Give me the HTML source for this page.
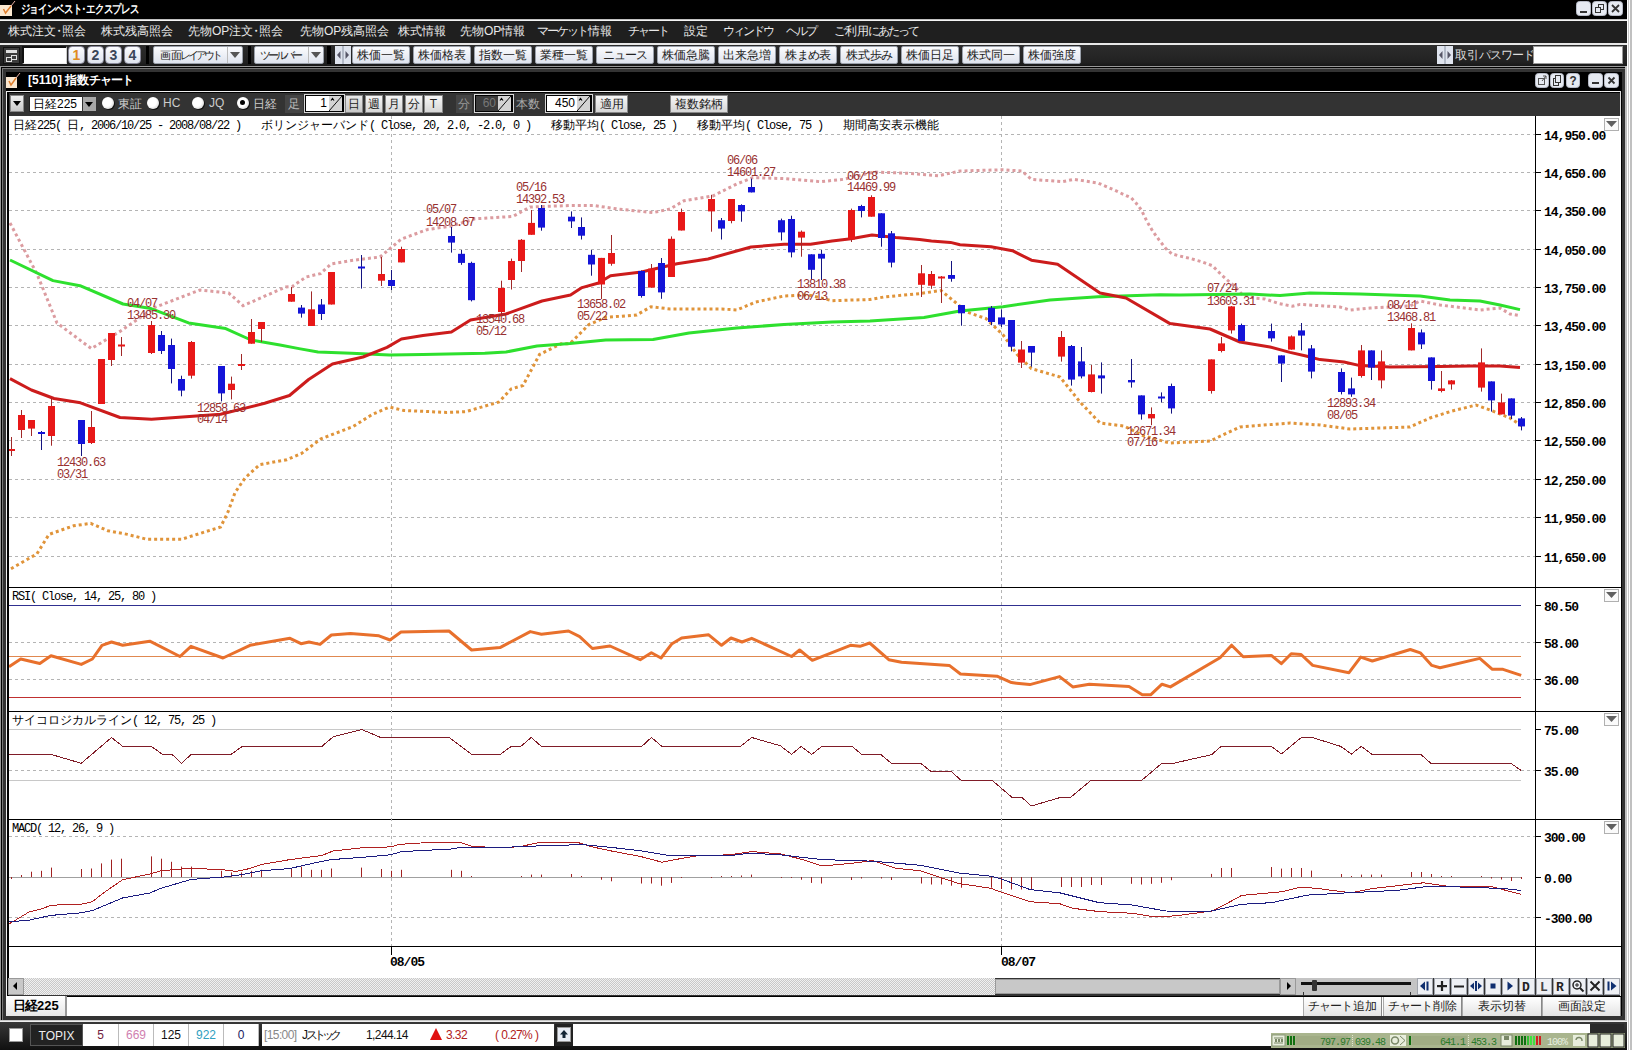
<!DOCTYPE html>
<html><head><meta charset="utf-8">
<style>
*{margin:0;padding:0;box-sizing:border-box}
html,body{width:1632px;height:1050px;overflow:hidden;background:#2c2c2c;font-family:"Liberation Sans",sans-serif;}
.a{position:absolute}
.t{position:absolute;white-space:nowrap;line-height:1}
svg text{font-family:"Liberation Mono",monospace}
.lbl{font-size:12px;fill:#983030;letter-spacing:-1.2px}
.ax{font-size:13px;font-weight:bold;fill:#000;letter-spacing:-1px}
.hd{font-size:12px;fill:#000}
.cj{font-family:"Liberation Sans",sans-serif}
.menu{color:#e8e8e8;font-size:12px;top:25px;--kw:10px}
.btn{position:absolute;background:linear-gradient(#fbfcfe,#dfe4ee);border:1px solid #9aa0aa;border-radius:2px;color:#222;font-size:12px;text-align:center;line-height:16px;white-space:nowrap}
.tb{top:46px;height:18px;width:58px}
.wb{position:absolute;background:linear-gradient(#f8faff,#dde2ec);border-radius:3px;border:1px solid #777;color:#333;font-size:11px;font-weight:bold;text-align:center;line-height:12px}
.cb{position:absolute;top:95px;height:18px;background:linear-gradient(#f6f6f6,#d6d6d6);border:1px solid #888;color:#222;font-size:12px;text-align:center;line-height:16px}
.inp{position:absolute;background:#fff;border:1px solid #666;font-size:12px;text-align:right;color:#000;line-height:14px}
.radio{position:absolute;top:97px;width:12px;height:12px;border-radius:50%;background:radial-gradient(circle at 40% 40%,#fff 45%,#bbb 100%);box-shadow:1px 1px 0 #111}
.rt{position:absolute;top:96px;color:#ccc;font-size:12px}
.c{display:inline-flex;justify-content:center;width:var(--cw,12px);font-weight:inherit}
.c.k{width:var(--kw,11px)}
.c.h{width:6px}
.zb{position:absolute;top:979px;width:16px;height:16px;background:linear-gradient(#f4f6fa,#d8dce4);border:1px solid #999;color:#10306a;font-size:12px;font-weight:bold;text-align:center;line-height:14px}
.cell{position:absolute;top:1024px;height:22px;background:#fff;font-size:12px;text-align:center;line-height:22px;border-right:1px solid #bbb}
.bb{position:absolute;top:997px;height:19px;background:linear-gradient(#fff,#e4e4e4);border-left:1px solid #aaa;border-right:1px solid #888;font-size:12px;color:#222;text-align:center;line-height:18px}
</style></head><body>
<!-- title bar -->
<div class="a" style="left:0;top:0;width:1632px;height:19px;background:#000"></div>
<svg class="a" style="left:0;top:0" width="18" height="18"><rect x="0" y="5" width="12" height="11" fill="#fbe8d0"/><path d="M3.5 9 L5.5 13 L11 6" stroke="#e08030" stroke-width="1.5" fill="none"/><path d="M11 6 L15 1" stroke="#e8b0a0" stroke-width="1"/></svg>
<div class="t" style="left:21px;top:3px;color:#fff;font-size:12px;font-weight:bold;transform:scaleX(0.79);transform-origin:0 0"><b class="c k">ジ</b><b class="c k">ョ</b><b class="c k">イ</b><b class="c k">ン</b><b class="c k">ベ</b><b class="c k">ス</b><b class="c k">ト</b><b class="c h">・</b><b class="c k">エ</b><b class="c k">ク</b><b class="c k">ス</b><b class="c k">プ</b><b class="c k">レ</b><b class="c k">ス</b></div>
<svg class="a" style="left:1576px;top:1px" width="15" height="15"><rect x="0.5" y="0.5" width="14" height="14" rx="3" fill="#e6eaf2" stroke="#b8bcc8"/><rect x="4" y="10" width="7" height="2" fill="#333"/></svg><svg class="a" style="left:1592px;top:1px" width="15" height="15"><rect x="0.5" y="0.5" width="14" height="14" rx="3" fill="#e6eaf2" stroke="#b8bcc8"/><rect x="6.5" y="3.5" width="5" height="5" fill="none" stroke="#333"/><rect x="3.5" y="6.5" width="5" height="5" fill="#e6eaf2" stroke="#333"/></svg><svg class="a" style="left:1608px;top:1px" width="15" height="15"><rect x="0.5" y="0.5" width="14" height="14" rx="3" fill="#e6eaf2" stroke="#b8bcc8"/><path d="M4 4 L11 11 M11 4 L4 11" stroke="#333" stroke-width="1.8"/></svg>
<div class="a" style="left:0;top:19px;width:1632px;height:1px;background:#c0c0c0"></div><div class="a" style="left:0;top:20px;width:1632px;height:1px;background:#f4f4f4"></div>
<!-- menu -->
<div class="a" style="left:0;top:21px;width:1632px;height:22px;background:#1f1f1f"></div>
<div class="t menu" style="left:8px"><b class="c">株</b><b class="c">式</b><b class="c">注</b><b class="c">文</b><b class="c h">・</b><b class="c">照</b><b class="c">会</b></div>
<div class="t menu" style="left:101px"><b class="c">株</b><b class="c">式</b><b class="c">残</b><b class="c">高</b><b class="c">照</b><b class="c">会</b></div>
<div class="t menu" style="left:188px"><b class="c">先</b><b class="c">物</b>OP<b class="c">注</b><b class="c">文</b><b class="c h">・</b><b class="c">照</b><b class="c">会</b></div>
<div class="t menu" style="left:300px"><b class="c">先</b><b class="c">物</b>OP<b class="c">残</b><b class="c">高</b><b class="c">照</b><b class="c">会</b></div>
<div class="t menu" style="left:398px"><b class="c">株</b><b class="c">式</b><b class="c">情</b><b class="c">報</b></div>
<div class="t menu" style="left:460px"><b class="c">先</b><b class="c">物</b>OP<b class="c">情</b><b class="c">報</b></div>
<div class="t menu" style="left:538px"><b class="c k">マ</b><b class="c k">ー</b><b class="c k">ケ</b><b class="c k">ッ</b><b class="c k">ト</b><b class="c">情</b><b class="c">報</b></div>
<div class="t menu" style="left:629px"><b class="c k">チ</b><b class="c k">ャ</b><b class="c k">ー</b><b class="c k">ト</b></div>
<div class="t menu" style="left:684px"><b class="c">設</b><b class="c">定</b></div>
<div class="t menu" style="left:724px"><b class="c k">ウ</b><b class="c k">ィ</b><b class="c k">ン</b><b class="c k">ド</b><b class="c k">ウ</b></div>
<div class="t menu" style="left:787px"><b class="c k">ヘ</b><b class="c k">ル</b><b class="c k">プ</b></div>
<div class="t menu" style="left:835px"><b class="c k">ご</b><b class="c">利</b><b class="c">用</b><b class="c k">に</b><b class="c k">あ</b><b class="c k">た</b><b class="c k">っ</b><b class="c k">て</b></div>
<div class="a" style="left:0;top:43px;width:1628px;height:2px;background:#e8e8e8"></div>
<!-- toolbar -->
<div class="a" style="left:0;top:45px;width:1628px;height:21px;background:linear-gradient(#2c2c2c,#222 80%,#181818)"></div>
<svg class="a" style="left:3px;top:47px" width="17" height="17"><rect width="17" height="17" fill="#111"/><rect x="1" y="1" width="15" height="15" fill="#3c3c3c"/><rect x="3" y="3" width="11" height="3" fill="#e0e0e0"/><rect x="8.5" y="8.5" width="5" height="4" fill="none" stroke="#e0e0e0"/><rect x="3.5" y="10.5" width="5" height="4" fill="#3c3c3c" stroke="#e0e0e0"/></svg>
<div class="a" style="left:22px;top:46px;width:45px;height:18px;background:#fff;border-top:2px solid #111;border-left:2px solid #111;border-right:1px solid #ccc;border-bottom:1px solid #eee"></div>
<div class="btn" style="left:68px;top:46px;width:17px;height:18px;color:#e08a20;font-weight:bold;font-size:14px;border-radius:4px;border-color:#889">1</div>
<div class="btn" style="left:87px;top:46px;width:17px;height:18px;color:#3a4658;font-weight:bold;font-size:14px;border-radius:4px;border-color:#889">2</div>
<div class="btn" style="left:105px;top:46px;width:17px;height:18px;color:#3a4658;font-weight:bold;font-size:14px;border-radius:4px;border-color:#889">3</div>
<div class="btn" style="left:124px;top:46px;width:17px;height:18px;color:#3a4658;font-weight:bold;font-size:14px;border-radius:4px;border-color:#889">4</div>
<div class="a" style="left:146px;top:46px;width:3px;height:18px;background:#000"></div>
<div class="btn tb" style="left:153px;width:90px;text-align:left;padding-left:6px;font-size:11px;--cw:11px;--kw:7.8px"><b class="c">画</b><b class="c">面</b><b class="c k">レ</b><b class="c k">イ</b><b class="c k">ア</b><b class="c k">ウ</b><b class="c k">ト</b></div>
<div class="a" style="left:227px;top:47px;width:1px;height:16px;background:#bbb"></div>
<div class="a" style="left:230px;top:52px;width:0;height:0;border-left:5px solid transparent;border-right:5px solid transparent;border-top:6px solid #555"></div>
<div class="a" style="left:248px;top:46px;width:3px;height:18px;background:#000"></div>
<div class="btn tb" style="left:254px;width:70px;text-align:left;padding-left:6px;font-size:11px;--kw:8.2px"><b class="c k">ツ</b><b class="c k">ー</b><b class="c k">ル</b><b class="c k">バ</b><b class="c k">ー</b></div>
<div class="a" style="left:308px;top:47px;width:1px;height:16px;background:#bbb"></div>
<div class="a" style="left:311px;top:52px;width:0;height:0;border-left:5px solid transparent;border-right:5px solid transparent;border-top:6px solid #555"></div>
<div class="a" style="left:327px;top:46px;width:4px;height:18px;background:#000"></div>
<svg class="a" style="left:335px;top:46px" width="16" height="18"><rect x="0" y="0" width="8" height="18" fill="#dfe4ee"/><rect x="8" y="0" width="8" height="18" fill="#dfe4ee"/><rect x="7.5" y="0" width="1" height="18" fill="#8890a0"/><path d="M5.5 5 L2 9 L5.5 13 Z" fill="#556"/><path d="M10.5 5 L14 9 L10.5 13 Z" fill="#556"/></svg>
<div class="btn tb" style="left:352px"><b class="c">株</b><b class="c">価</b><b class="c">一</b><b class="c">覧</b></div>
<div class="btn tb" style="left:413px"><b class="c">株</b><b class="c">価</b><b class="c">格</b><b class="c">表</b></div>
<div class="btn tb" style="left:474px"><b class="c">指</b><b class="c">数</b><b class="c">一</b><b class="c">覧</b></div>
<div class="btn tb" style="left:535px"><b class="c">業</b><b class="c">種</b><b class="c">一</b><b class="c">覧</b></div>
<div class="btn tb" style="left:596px"><b class="c k">ニ</b><b class="c k">ュ</b><b class="c k">ー</b><b class="c k">ス</b></div>
<div class="btn tb" style="left:657px"><b class="c">株</b><b class="c">価</b><b class="c">急</b><b class="c">騰</b></div>
<div class="btn tb" style="left:718px"><b class="c">出</b><b class="c">来</b><b class="c">急</b><b class="c">増</b></div>
<div class="btn tb" style="left:779px"><b class="c">株</b><b class="c k">ま</b><b class="c k">め</b><b class="c">表</b></div>
<div class="btn tb" style="left:840px"><b class="c">株</b><b class="c">式</b><b class="c">歩</b><b class="c k">み</b></div>
<div class="btn tb" style="left:901px"><b class="c">株</b><b class="c">価</b><b class="c">日</b><b class="c">足</b></div>
<div class="btn tb" style="left:962px"><b class="c">株</b><b class="c">式</b><b class="c">同</b><b class="c">一</b></div>
<div class="btn tb" style="left:1023px"><b class="c">株</b><b class="c">価</b><b class="c">強</b><b class="c">度</b></div>
<svg class="a" style="left:1437px;top:46px" width="16" height="18"><rect x="0" y="0" width="8" height="18" fill="#dfe4ee"/><rect x="8" y="0" width="8" height="18" fill="#dfe4ee"/><rect x="7.5" y="0" width="1" height="18" fill="#8890a0"/><path d="M5.5 5 L2 9 L5.5 13 Z" fill="#556"/><path d="M10.5 5 L14 9 L10.5 13 Z" fill="#556"/></svg>
<div class="t" style="left:1455px;top:49px;color:#ddd;font-size:12px;--cw:12px;--kw:11px"><b class="c">取</b><b class="c">引</b><b class="c k">パ</b><b class="c k">ス</b><b class="c k">ワ</b><b class="c k">ー</b><b class="c k">ド</b></div>
<div class="inp" style="left:1533px;top:46px;width:90px;height:18px;border-color:#999"></div>

<!-- MDI / chart window frame -->
<div class="a" style="left:0;top:66px;width:1625px;height:954px;background:#333"></div>
<div class="a" style="left:0;top:66px;width:1625px;height:1px;background:#999"></div>
<div class="a" style="left:1px;top:67px;width:1624px;height:1px;background:#000"></div>
<div class="a" style="left:2px;top:68px;width:1623px;height:1px;background:#777"></div>
<div class="a" style="left:0;top:66px;width:1px;height:954px;background:#999"></div>
<div class="a" style="left:1px;top:67px;width:1px;height:953px;background:#000"></div>
<div class="a" style="left:2px;top:68px;width:1px;height:952px;background:#777"></div>
<div class="a" style="left:1625px;top:66px;width:2px;height:984px;background:#c0c0c0"></div>
<div class="a" style="left:1627px;top:0;width:1px;height:1050px;background:#fff"></div>
<div class="a" style="left:1628px;top:0;width:1px;height:1050px;background:#c8c8c8"></div>
<div class="a" style="left:1629px;top:0;width:1px;height:1050px;background:#fff"></div>
<div class="a" style="left:1630px;top:0;width:2px;height:1050px;background:#c0c0c0"></div>
<div class="a" style="left:6px;top:72px;width:1615px;height:19px;background:#000"></div>
<svg class="a" style="left:6px;top:71px" width="18" height="18"><rect x="0" y="6" width="11" height="11" fill="#fbe8d0"/><path d="M3 10 L5 14 L10 7" stroke="#e08030" stroke-width="1.5" fill="none"/><path d="M10 7 L14 2" stroke="#e8b0a0" stroke-width="1"/></svg>
<div class="t" style="left:28px;top:74px;color:#fff;font-size:12px;font-weight:bold">[5110] <b class="c">指</b><b class="c">数</b><b class="c k">チ</b><b class="c k">ャ</b><b class="c k">ー</b><b class="c k">ト</b></div>
<svg class="a" style="left:1535px;top:73px" width="14" height="15"><rect x="0.5" y="0.5" width="13" height="14" rx="3" fill="#e6eaf2" stroke="#b8bcc8"/><rect x="3.5" y="5.5" width="6" height="6" fill="none" stroke="#555"/><path d="M7 8 L11 3 M8 3 L11 3 L11 6" stroke="#555" fill="none"/></svg><svg class="a" style="left:1550px;top:73px" width="14" height="15"><rect x="0.5" y="0.5" width="13" height="14" rx="3" fill="#e6eaf2" stroke="#b8bcc8"/><rect x="3.5" y="5.5" width="5" height="7" fill="none" stroke="#333"/><rect x="5.5" y="2.5" width="5" height="7" fill="#e6eaf2" stroke="#333"/></svg><svg class="a" style="left:1566px;top:73px" width="14" height="15"><rect x="0.5" y="0.5" width="13" height="14" rx="3" fill="#e6eaf2" stroke="#b8bcc8"/><text x="3.5" y="12" font-family="Liberation Sans" font-weight="bold" font-size="12" fill="#333">?</text></svg><svg class="a" style="left:1588px;top:73px" width="15" height="15"><rect x="0.5" y="0.5" width="14" height="14" rx="3" fill="#e6eaf2" stroke="#b8bcc8"/><rect x="4" y="9" width="7" height="2" fill="#333"/></svg><svg class="a" style="left:1604px;top:73px" width="15" height="15"><rect x="0.5" y="0.5" width="14" height="14" rx="3" fill="#e6eaf2" stroke="#b8bcc8"/><path d="M4.5 4.5 L10.5 10.5 M10.5 4.5 L4.5 10.5" stroke="#333" stroke-width="1.8"/></svg>
<div class="a" style="left:6px;top:91px;width:1615px;height:1px;background:#f0f0f0"></div><div class="a" style="left:6px;top:91px;width:1px;height:925px;background:#f0f0f0"></div>
<div class="a" style="left:7px;top:92px;width:1614px;height:24px;background:#333;border-top:1px solid #000;border-left:2px solid #000"></div>
<div class="a" style="left:1620px;top:91px;width:1px;height:925px;background:#ddd"></div><div class="a" style="left:1621px;top:72px;width:1px;height:944px;background:#000"></div>
<!-- chart toolbar -->
<div class="cb" style="left:10px;width:14px;height:17px;background:linear-gradient(#f0f0f0,#c8c8c8)"></div><div class="a" style="left:13px;top:101px;width:0;height:0;border-left:4px solid transparent;border-right:4px solid transparent;border-top:5px solid #000"></div>
<div class="inp" style="left:29px;top:96px;width:54px;height:16px;text-align:left;padding-left:3px;border-color:#222;line-height:15px"><b class="c">日</b><b class="c">経</b>225</div>
<div class="cb" style="left:82px;top:96px;width:15px;height:16px;background:#a8a8a8;border-color:#333"></div><div class="a" style="left:85px;top:102px;width:0;height:0;border-left:4.5px solid transparent;border-right:4.5px solid transparent;border-top:5px solid #000"></div>
<div class="radio" style="left:102px"></div><div class="rt" style="left:118px"><b class="c">東</b><b class="c">証</b></div>
<div class="radio" style="left:147px"></div><div class="rt" style="left:163px">HC</div>
<div class="radio" style="left:192px"></div><div class="rt" style="left:209px">JQ</div>
<div class="radio" style="left:237px"></div><div class="a" style="left:240px;top:100px;width:5px;height:5px;border-radius:50%;background:#000"></div><div class="rt" style="left:253px"><b class="c">日</b><b class="c">経</b></div>
<div class="a" style="left:285px;top:95px;width:18px;height:18px;background:#444;color:#bbb;font-size:12px;line-height:18px;text-align:center"><b class="c">足</b></div>
<div class="a" style="left:304px;top:94px;width:41px;height:19px;border:1px solid #d8d8d8;background:#000"></div><div class="a" style="left:306px;top:96px;width:23px;height:15px;background:#fff;color:#000;font-size:12px;text-align:right;line-height:15px;padding-right:2px">1</div><svg class="a" style="left:329px;top:96px" width="13" height="15"><rect width="13" height="15" fill="#d4d4d4"/><path d="M0 15 L13 0" stroke="#111" stroke-width="1"/><path d="M2 4.5 L3.5 2.5 L5 4.5" stroke="#000" stroke-width="1.2" fill="none"/></svg>
<div class="cb" style="left:345px;width:18px;background:linear-gradient(#e8e8e8,#c8c8c8)"><b class="c">日</b></div>
<div class="cb" style="left:365px;width:18px"><b class="c">週</b></div>
<div class="cb" style="left:385px;width:18px"><b class="c">月</b></div>
<div class="cb" style="left:405px;width:18px"><b class="c">分</b></div>
<div class="cb" style="left:424px;width:19px">T</div>
<div class="a" style="left:456px;top:95px;width:16px;height:18px;background:#444;color:#999;font-size:12px;line-height:18px;text-align:center"><b class="c">分</b></div>
<div class="a" style="left:474px;top:94px;width:40px;height:19px;border:1px solid #d8d8d8;background:#000"></div><div class="a" style="left:476px;top:96px;width:22px;height:15px;background:#3a3a3a;color:#777;font-size:12px;text-align:right;line-height:15px;padding-right:2px">60</div><svg class="a" style="left:498px;top:96px" width="13" height="15"><rect width="13" height="15" fill="#d4d4d4"/><path d="M0 15 L13 0" stroke="#111" stroke-width="1"/><path d="M2 4.5 L3.5 2.5 L5 4.5" stroke="#000" stroke-width="1.2" fill="none"/></svg>
<div class="t" style="left:516px;top:98px;color:#aaa;font-size:12px"><b class="c">本</b><b class="c">数</b></div>
<div class="a" style="left:545px;top:94px;width:48px;height:19px;border:1px solid #d8d8d8;background:#000"></div><div class="a" style="left:547px;top:96px;width:30px;height:15px;background:#fff;color:#000;font-size:12px;text-align:right;line-height:15px;padding-right:2px">450</div><svg class="a" style="left:577px;top:96px" width="13" height="15"><rect width="13" height="15" fill="#d4d4d4"/><path d="M0 15 L13 0" stroke="#111" stroke-width="1"/><path d="M2 4.5 L3.5 2.5 L5 4.5" stroke="#000" stroke-width="1.2" fill="none"/></svg>
<div class="cb" style="left:595px;width:33px"><b class="c">適</b><b class="c">用</b></div>
<div class="cb" style="left:670px;width:58px"><b class="c">複</b><b class="c">数</b><b class="c">銘</b><b class="c">柄</b></div>
<svg width="1632" height="1050" viewBox="0 0 1632 1050" style="position:absolute;left:0;top:0">
<rect x="8" y="116" width="1613" height="862" fill="#fff"/>
<rect x="8" y="587" width="1613" height="1" fill="#000"/>
<rect x="8" y="711" width="1613" height="1" fill="#000"/>
<rect x="8" y="819" width="1613" height="1" fill="#000"/>
<rect x="8" y="946" width="1613" height="1" fill="#000"/>
<rect x="1535" y="116" width="1" height="862" fill="#000"/>
<line x1="9" y1="134.5" x2="1535" y2="134.5" stroke="#b4b4b4" stroke-width="1" stroke-dasharray="3,3"/>
<line x1="9" y1="172.5" x2="1535" y2="172.5" stroke="#b4b4b4" stroke-width="1" stroke-dasharray="3,3"/>
<line x1="9" y1="210.5" x2="1535" y2="210.5" stroke="#b4b4b4" stroke-width="1" stroke-dasharray="3,3"/>
<line x1="9" y1="249.5" x2="1535" y2="249.5" stroke="#b4b4b4" stroke-width="1" stroke-dasharray="3,3"/>
<line x1="9" y1="287.5" x2="1535" y2="287.5" stroke="#b4b4b4" stroke-width="1" stroke-dasharray="3,3"/>
<line x1="9" y1="325.5" x2="1535" y2="325.5" stroke="#b4b4b4" stroke-width="1" stroke-dasharray="3,3"/>
<line x1="9" y1="364.5" x2="1535" y2="364.5" stroke="#b4b4b4" stroke-width="1" stroke-dasharray="3,3"/>
<line x1="9" y1="402.5" x2="1535" y2="402.5" stroke="#b4b4b4" stroke-width="1" stroke-dasharray="3,3"/>
<line x1="9" y1="440.5" x2="1535" y2="440.5" stroke="#b4b4b4" stroke-width="1" stroke-dasharray="3,3"/>
<line x1="9" y1="479.5" x2="1535" y2="479.5" stroke="#b4b4b4" stroke-width="1" stroke-dasharray="3,3"/>
<line x1="9" y1="517.5" x2="1535" y2="517.5" stroke="#b4b4b4" stroke-width="1" stroke-dasharray="3,3"/>
<line x1="9" y1="556.5" x2="1535" y2="556.5" stroke="#b4b4b4" stroke-width="1" stroke-dasharray="3,3"/>
<line x1="9" y1="642.5" x2="1535" y2="642.5" stroke="#b4b4b4" stroke-width="1" stroke-dasharray="3,3"/>
<line x1="9" y1="679.5" x2="1535" y2="679.5" stroke="#b4b4b4" stroke-width="1" stroke-dasharray="3,3"/>
<line x1="9" y1="770.5" x2="1535" y2="770.5" stroke="#b4b4b4" stroke-width="1" stroke-dasharray="3,3"/>
<line x1="9" y1="836.5" x2="1535" y2="836.5" stroke="#b4b4b4" stroke-width="1" stroke-dasharray="3,3"/>
<line x1="9" y1="917.5" x2="1535" y2="917.5" stroke="#b4b4b4" stroke-width="1" stroke-dasharray="3,3"/>
<line x1="391.5" y1="116" x2="391.5" y2="946" stroke="#b4b4b4" stroke-width="1" stroke-dasharray="3,3"/>
<rect x="391" y="946" width="1" height="9" fill="#000"/>
<line x1="1001.5" y1="116" x2="1001.5" y2="946" stroke="#b4b4b4" stroke-width="1" stroke-dasharray="3,3"/>
<rect x="1001" y="946" width="1" height="9" fill="#000"/>
<rect x="1536" y="134" width="5" height="1" fill="#000"/>
<rect x="1536" y="172" width="5" height="1" fill="#000"/>
<rect x="1536" y="210" width="5" height="1" fill="#000"/>
<rect x="1536" y="249" width="5" height="1" fill="#000"/>
<rect x="1536" y="287" width="5" height="1" fill="#000"/>
<rect x="1536" y="325" width="5" height="1" fill="#000"/>
<rect x="1536" y="364" width="5" height="1" fill="#000"/>
<rect x="1536" y="402" width="5" height="1" fill="#000"/>
<rect x="1536" y="440" width="5" height="1" fill="#000"/>
<rect x="1536" y="479" width="5" height="1" fill="#000"/>
<rect x="1536" y="517" width="5" height="1" fill="#000"/>
<rect x="1536" y="556" width="5" height="1" fill="#000"/>
<rect x="1536" y="605" width="5" height="1" fill="#000"/>
<rect x="1536" y="642" width="5" height="1" fill="#000"/>
<rect x="1536" y="679" width="5" height="1" fill="#000"/>
<rect x="1536" y="729" width="5" height="1" fill="#000"/>
<rect x="1536" y="770" width="5" height="1" fill="#000"/>
<rect x="1536" y="836" width="5" height="1" fill="#000"/>
<rect x="1536" y="877" width="5" height="1" fill="#000"/>
<rect x="1536" y="917" width="5" height="1" fill="#000"/>
<polyline points="10.0,223.0 37.0,274.0 57.0,323.0 91.4,348.6 120.0,331.4 155.7,307.0 200.0,290.0 228.6,293.0 243.0,305.7 285.7,287.0 292.0,286.7 306.0,277.0 320.5,273.6 331.0,264.0 351.4,260.5 380.0,257.0 401.4,239.0 427.6,229.5 451.4,226.0 475.0,218.8 513.0,216.4 530.0,207.0 570.0,205.5 594.0,205.5 617.6,209.0 653.0,212.6 670.0,209.0 684.0,200.7 712.8,196.0 736.7,184.0 753.0,177.6 784.0,178.6 820.0,181.7 843.8,179.3 874.0,172.0 907.6,173.3 938.6,175.7 960.0,171.0 1003.0,169.8 1022.0,171.0 1031.4,179.3 1062.4,181.7 1074.0,179.3 1098.0,183.0 1102.3,184.9 1113.7,189.8 1124.4,194.8 1131.2,197.8 1135.8,202.8 1141.1,209.6 1147.2,221.8 1152.6,231.0 1159.2,240.1 1165.6,248.4 1172.0,253.9 1178.5,255.7 1190.4,258.5 1201.5,261.7 1212.5,265.8 1221.7,275.0 1229.0,281.5 1236.4,287.9 1241.9,294.3 1253.9,298.0 1264.9,298.9 1278.7,303.5 1292.5,306.3 1300.0,304.4 1340.0,307.0 1350.0,310.0 1370.0,308.0 1410.0,306.0 1420.0,301.0 1440.0,305.0 1480.0,310.0 1500.0,308.0 1510.0,314.0 1520.0,315.6" fill="none" stroke="#dc9ca0" stroke-width="3" stroke-dasharray="3,3"/>
<polyline points="11.0,568.7 36.8,554.0 49.0,534.4 73.5,525.8 90.7,523.4 107.8,530.7 127.5,534.4 147.0,539.3 181.4,539.3 220.6,527.0 228.0,512.0 235.0,492.7 245.0,478.0 259.8,464.6 286.8,459.7 301.5,453.5 321.0,438.8 353.0,426.6 372.5,414.3 389.5,407.0 403.8,410.5 446.7,412.4 465.7,411.7 499.0,402.0 511.0,389.0 523.0,385.5 539.5,354.5 561.0,343.8 570.0,343.6 589.0,324.5 605.7,317.4 636.7,315.0 651.0,306.7 670.0,309.0 722.0,309.0 736.7,310.0 755.7,302.0 784.0,296.0 808.0,294.8 832.0,300.7 870.0,299.5 883.8,297.0 919.5,293.6 941.0,290.5 955.0,302.0 967.0,312.0 986.0,318.6 1003.0,334.8 1017.0,354.3 1031.4,368.6 1060.0,377.0 1080.0,402.0 1100.0,423.0 1124.0,426.0 1144.0,436.0 1170.0,443.0 1210.0,441.0 1240.0,427.0 1290.0,423.0 1320.0,425.0 1350.0,429.0 1410.0,427.0 1430.0,418.0 1450.0,411.6 1476.0,405.0 1490.0,410.0 1510.0,418.0 1522.0,426.0" fill="none" stroke="#e0943a" stroke-width="3" stroke-dasharray="3,3"/>
<polyline points="10.0,260.0 53.0,280.6 80.0,285.7 123.0,304.0 151.0,308.6 188.6,322.9 225.7,328.6 251.0,340.0 280.0,345.0 299.0,348.6 318.0,352.0 351.4,353.3 389.5,355.0 423.0,354.5 484.8,353.3 506.0,352.0 537.0,346.0 570.0,343.6 605.7,340.0 653.0,339.5 689.0,333.0 736.7,328.0 784.0,324.5 832.0,322.0 870.0,321.0 924.0,317.4 960.0,311.0 1003.0,306.7 1050.0,300.0 1098.0,296.7 1160.0,294.8 1180.0,295.0 1250.0,294.0 1280.0,295.6 1310.0,293.0 1360.0,294.0 1420.0,296.0 1450.0,300.0 1480.0,301.0 1500.0,305.0 1520.0,309.6" fill="none" stroke="#2ee02e" stroke-width="3" stroke-linejoin="round"/>
<polyline points="10.0,378.6 31.4,390.0 54.0,398.5 80.5,402.8 120.0,417.5 151.5,419.3 186.0,416.8 220.6,414.3 264.7,403.3 289.5,395.5 308.6,379.5 332.4,364.0 363.0,357.0 387.0,347.4 401.4,339.0 423.0,335.5 451.4,332.0 470.5,320.0 506.0,314.0 542.0,301.0 570.5,295.0 582.0,287.6 598.6,283.0 610.5,275.7 641.4,272.0 677.0,263.8 708.0,259.0 751.0,247.0 784.0,244.3 810.5,244.3 832.0,241.0 851.0,238.8 872.0,235.0 895.7,237.6 919.5,239.5 931.4,241.0 950.5,242.4 960.0,244.8 991.0,246.7 1012.4,250.7 1031.4,260.2 1057.6,264.3 1100.0,293.0 1126.0,298.0 1170.0,323.6 1210.0,329.0 1240.0,342.0 1270.0,347.0 1290.0,352.4 1306.0,356.0 1320.0,359.6 1344.0,362.0 1360.0,365.6 1390.0,367.0 1440.0,366.4 1470.0,366.0 1500.0,366.0 1520.0,367.6" fill="none" stroke="#cc1c1c" stroke-width="3" stroke-linejoin="round"/>
<rect x="11" y="437.0" width="1" height="19.0" fill="#a02828"/>
<rect x="8" y="449.0" width="7" height="2.0" fill="#e81818"/>
<rect x="21" y="410.0" width="1" height="28.0" fill="#a02828"/>
<rect x="18" y="415.0" width="7" height="15.0" fill="#e81818"/>
<rect x="31" y="420.0" width="1" height="16.0" fill="#a02828"/>
<rect x="28" y="420.0" width="7" height="8.6" fill="#e81818"/>
<rect x="41" y="431.0" width="1" height="19.0" fill="#141480"/>
<rect x="38" y="432.0" width="7" height="2.0" fill="#1414d8"/>
<rect x="51" y="398.6" width="1" height="47.1" fill="#a02828"/>
<rect x="48" y="406.0" width="7" height="30.0" fill="#e81818"/>
<rect x="81" y="420.0" width="1" height="36.0" fill="#141480"/>
<rect x="78" y="420.0" width="7" height="24.0" fill="#1414d8"/>
<rect x="91" y="411.0" width="1" height="33.0" fill="#a02828"/>
<rect x="88" y="427.0" width="7" height="16.0" fill="#e81818"/>
<rect x="101" y="359.0" width="1" height="45.0" fill="#a02828"/>
<rect x="98" y="359.0" width="7" height="45.0" fill="#e81818"/>
<rect x="111" y="333.0" width="1" height="33.0" fill="#a02828"/>
<rect x="108" y="333.0" width="7" height="27.0" fill="#e81818"/>
<rect x="121" y="337.0" width="1" height="19.0" fill="#a02828"/>
<rect x="118" y="344.5" width="7" height="2.0" fill="#e81818"/>
<rect x="151" y="321.0" width="1" height="33.0" fill="#a02828"/>
<rect x="148" y="325.0" width="7" height="28.0" fill="#e81818"/>
<rect x="161" y="331.0" width="1" height="23.0" fill="#141480"/>
<rect x="158" y="335.0" width="7" height="16.0" fill="#1414d8"/>
<rect x="171" y="338.6" width="1" height="44.8" fill="#141480"/>
<rect x="168" y="345.0" width="7" height="24.0" fill="#1414d8"/>
<rect x="181" y="375.7" width="1" height="20.6" fill="#141480"/>
<rect x="178" y="379.0" width="7" height="11.6" fill="#1414d8"/>
<rect x="191" y="341.0" width="1" height="37.6" fill="#a02828"/>
<rect x="188" y="342.0" width="7" height="33.7" fill="#e81818"/>
<rect x="221" y="366.0" width="1" height="35.4" fill="#141480"/>
<rect x="218" y="366.0" width="7" height="27.4" fill="#1414d8"/>
<rect x="231" y="376.6" width="1" height="22.8" fill="#a02828"/>
<rect x="228" y="383.7" width="7" height="6.3" fill="#e81818"/>
<rect x="241" y="354.0" width="1" height="16.0" fill="#a02828"/>
<rect x="238" y="364.0" width="7" height="2.0" fill="#e81818"/>
<rect x="251" y="319.0" width="1" height="24.7" fill="#a02828"/>
<rect x="248" y="332.0" width="7" height="11.7" fill="#e81818"/>
<rect x="261" y="322.0" width="1" height="20.0" fill="#a02828"/>
<rect x="258" y="322.0" width="7" height="7.0" fill="#e81818"/>
<rect x="291" y="287.0" width="1" height="14.7" fill="#a02828"/>
<rect x="288" y="294.0" width="7" height="7.7" fill="#e81818"/>
<rect x="301" y="305.0" width="1" height="12.6" fill="#141480"/>
<rect x="298" y="307.6" width="7" height="6.0" fill="#1414d8"/>
<rect x="311" y="291.4" width="1" height="34.6" fill="#a02828"/>
<rect x="308" y="309.3" width="7" height="16.7" fill="#e81818"/>
<rect x="321" y="299.0" width="1" height="21.0" fill="#141480"/>
<rect x="318" y="304.5" width="7" height="9.5" fill="#1414d8"/>
<rect x="331" y="272.0" width="1" height="32.5" fill="#a02828"/>
<rect x="328" y="272.0" width="7" height="32.5" fill="#e81818"/>
<rect x="361" y="255.0" width="1" height="33.6" fill="#141480"/>
<rect x="358" y="266.5" width="7" height="2.0" fill="#1414d8"/>
<rect x="381" y="257.0" width="1" height="29.0" fill="#a02828"/>
<rect x="378" y="274.0" width="7" height="6.7" fill="#e81818"/>
<rect x="391" y="270.0" width="1" height="20.0" fill="#141480"/>
<rect x="388" y="280.0" width="7" height="6.0" fill="#1414d8"/>
<rect x="401" y="246.7" width="1" height="15.7" fill="#a02828"/>
<rect x="398" y="249.0" width="7" height="13.4" fill="#e81818"/>
<rect x="451" y="227.0" width="1" height="25.6" fill="#141480"/>
<rect x="448" y="236.0" width="7" height="6.6" fill="#1414d8"/>
<rect x="461" y="250.0" width="1" height="14.8" fill="#141480"/>
<rect x="458" y="253.8" width="7" height="9.1" fill="#1414d8"/>
<rect x="471" y="261.7" width="1" height="39.7" fill="#141480"/>
<rect x="468" y="262.9" width="7" height="37.3" fill="#1414d8"/>
<rect x="501" y="280.7" width="1" height="34.1" fill="#a02828"/>
<rect x="498" y="287.9" width="7" height="24.1" fill="#e81818"/>
<rect x="511" y="258.6" width="1" height="30.9" fill="#a02828"/>
<rect x="508" y="261.0" width="7" height="19.0" fill="#e81818"/>
<rect x="521" y="239.0" width="1" height="33.0" fill="#a02828"/>
<rect x="518" y="239.8" width="7" height="21.2" fill="#e81818"/>
<rect x="531" y="210.0" width="1" height="24.8" fill="#a02828"/>
<rect x="528" y="222.9" width="7" height="11.9" fill="#e81818"/>
<rect x="541" y="205.0" width="1" height="25.7" fill="#141480"/>
<rect x="538" y="208.0" width="7" height="19.6" fill="#1414d8"/>
<rect x="571" y="211.4" width="1" height="16.6" fill="#141480"/>
<rect x="568" y="216.7" width="7" height="4.7" fill="#1414d8"/>
<rect x="581" y="217.4" width="1" height="22.1" fill="#141480"/>
<rect x="578" y="227.0" width="7" height="8.7" fill="#1414d8"/>
<rect x="591" y="250.0" width="1" height="25.7" fill="#141480"/>
<rect x="588" y="254.8" width="7" height="9.7" fill="#1414d8"/>
<rect x="601" y="257.9" width="1" height="41.1" fill="#a02828"/>
<rect x="598" y="257.9" width="7" height="26.6" fill="#e81818"/>
<rect x="611" y="235.0" width="1" height="30.7" fill="#a02828"/>
<rect x="608" y="253.0" width="7" height="10.8" fill="#e81818"/>
<rect x="641" y="270.5" width="1" height="27.1" fill="#141480"/>
<rect x="638" y="271.0" width="7" height="25.0" fill="#1414d8"/>
<rect x="651" y="264.0" width="1" height="23.6" fill="#a02828"/>
<rect x="648" y="268.6" width="7" height="19.0" fill="#e81818"/>
<rect x="661" y="258.0" width="1" height="40.8" fill="#141480"/>
<rect x="658" y="263.0" width="7" height="29.4" fill="#1414d8"/>
<rect x="671" y="236.4" width="1" height="40.6" fill="#a02828"/>
<rect x="668" y="238.8" width="7" height="38.2" fill="#e81818"/>
<rect x="681" y="208.6" width="1" height="21.9" fill="#a02828"/>
<rect x="678" y="212.0" width="7" height="18.5" fill="#e81818"/>
<rect x="711" y="194.8" width="1" height="36.9" fill="#a02828"/>
<rect x="708" y="199.0" width="7" height="12.4" fill="#e81818"/>
<rect x="721" y="218.0" width="1" height="21.5" fill="#141480"/>
<rect x="718" y="220.2" width="7" height="8.4" fill="#1414d8"/>
<rect x="731" y="199.0" width="1" height="24.3" fill="#a02828"/>
<rect x="728" y="199.0" width="7" height="22.0" fill="#e81818"/>
<rect x="741" y="204.3" width="1" height="17.4" fill="#141480"/>
<rect x="738" y="205.0" width="7" height="6.4" fill="#1414d8"/>
<rect x="751" y="178.6" width="1" height="13.8" fill="#141480"/>
<rect x="748" y="187.0" width="7" height="5.4" fill="#1414d8"/>
<rect x="781" y="218.6" width="1" height="21.9" fill="#141480"/>
<rect x="778" y="220.2" width="7" height="12.2" fill="#1414d8"/>
<rect x="791" y="215.7" width="1" height="41.7" fill="#141480"/>
<rect x="788" y="219.0" width="7" height="33.4" fill="#1414d8"/>
<rect x="801" y="230.5" width="1" height="26.2" fill="#a02828"/>
<rect x="798" y="231.7" width="7" height="5.9" fill="#e81818"/>
<rect x="811" y="254.3" width="1" height="25.3" fill="#141480"/>
<rect x="808" y="254.3" width="7" height="15.5" fill="#1414d8"/>
<rect x="821" y="250.0" width="1" height="30.0" fill="#141480"/>
<rect x="818" y="253.8" width="7" height="4.8" fill="#1414d8"/>
<rect x="851" y="208.6" width="1" height="33.4" fill="#a02828"/>
<rect x="848" y="210.0" width="7" height="29.5" fill="#e81818"/>
<rect x="861" y="204.8" width="1" height="12.6" fill="#141480"/>
<rect x="858" y="206.0" width="7" height="5.0" fill="#1414d8"/>
<rect x="871" y="195.3" width="1" height="21.4" fill="#a02828"/>
<rect x="868" y="197.0" width="7" height="19.7" fill="#e81818"/>
<rect x="881" y="213.3" width="1" height="33.4" fill="#141480"/>
<rect x="878" y="213.3" width="7" height="24.7" fill="#1414d8"/>
<rect x="891" y="231.0" width="1" height="36.4" fill="#141480"/>
<rect x="888" y="233.3" width="7" height="29.3" fill="#1414d8"/>
<rect x="921" y="265.0" width="1" height="32.0" fill="#a02828"/>
<rect x="918" y="273.3" width="7" height="11.5" fill="#e81818"/>
<rect x="931" y="271.0" width="1" height="17.8" fill="#a02828"/>
<rect x="928" y="274.0" width="7" height="11.7" fill="#e81818"/>
<rect x="941" y="276.0" width="1" height="27.0" fill="#a02828"/>
<rect x="938" y="276.5" width="7" height="2.0" fill="#e81818"/>
<rect x="951" y="261.0" width="1" height="20.7" fill="#141480"/>
<rect x="948" y="275.0" width="7" height="3.8" fill="#1414d8"/>
<rect x="961" y="305.0" width="1" height="20.7" fill="#141480"/>
<rect x="958" y="305.0" width="7" height="8.3" fill="#1414d8"/>
<rect x="991" y="306.0" width="1" height="19.2" fill="#141480"/>
<rect x="988" y="307.9" width="7" height="14.1" fill="#1414d8"/>
<rect x="1001" y="309.5" width="1" height="17.5" fill="#141480"/>
<rect x="998" y="317.4" width="7" height="7.1" fill="#1414d8"/>
<rect x="1011" y="320.0" width="1" height="31.4" fill="#141480"/>
<rect x="1008" y="320.0" width="7" height="26.7" fill="#1414d8"/>
<rect x="1021" y="341.0" width="1" height="27.0" fill="#a02828"/>
<rect x="1018" y="349.5" width="7" height="13.1" fill="#e81818"/>
<rect x="1031" y="346.0" width="1" height="20.7" fill="#141480"/>
<rect x="1028" y="346.0" width="7" height="6.6" fill="#1414d8"/>
<rect x="1061" y="331.0" width="1" height="30.6" fill="#a02828"/>
<rect x="1058" y="337.0" width="7" height="19.6" fill="#e81818"/>
<rect x="1071" y="345.0" width="1" height="40.6" fill="#141480"/>
<rect x="1068" y="346.0" width="7" height="33.6" fill="#1414d8"/>
<rect x="1081" y="347.0" width="1" height="31.4" fill="#141480"/>
<rect x="1078" y="361.4" width="7" height="15.0" fill="#1414d8"/>
<rect x="1091" y="365.0" width="1" height="27.4" fill="#a02828"/>
<rect x="1088" y="374.4" width="7" height="17.6" fill="#e81818"/>
<rect x="1101" y="362.4" width="1" height="31.2" fill="#141480"/>
<rect x="1098" y="375.4" width="7" height="3.0" fill="#1414d8"/>
<rect x="1131" y="359.0" width="1" height="28.6" fill="#141480"/>
<rect x="1128" y="380.0" width="7" height="2.4" fill="#1414d8"/>
<rect x="1141" y="395.4" width="1" height="24.2" fill="#141480"/>
<rect x="1138" y="395.4" width="7" height="19.0" fill="#1414d8"/>
<rect x="1151" y="407.4" width="1" height="17.8" fill="#a02828"/>
<rect x="1148" y="414.0" width="7" height="4.4" fill="#e81818"/>
<rect x="1161" y="392.4" width="1" height="10.0" fill="#141480"/>
<rect x="1158" y="396.5" width="7" height="2.0" fill="#1414d8"/>
<rect x="1171" y="383.6" width="1" height="30.0" fill="#141480"/>
<rect x="1168" y="386.0" width="7" height="22.4" fill="#1414d8"/>
<rect x="1211" y="359.4" width="1" height="34.2" fill="#a02828"/>
<rect x="1208" y="359.4" width="7" height="31.6" fill="#e81818"/>
<rect x="1221" y="337.0" width="1" height="15.4" fill="#a02828"/>
<rect x="1218" y="343.4" width="7" height="7.6" fill="#e81818"/>
<rect x="1231" y="306.1" width="1" height="27.5" fill="#a02828"/>
<rect x="1228" y="306.4" width="7" height="24.0" fill="#e81818"/>
<rect x="1241" y="323.6" width="1" height="17.4" fill="#141480"/>
<rect x="1238" y="325.0" width="7" height="16.0" fill="#1414d8"/>
<rect x="1271" y="323.6" width="1" height="18.0" fill="#141480"/>
<rect x="1268" y="331.0" width="7" height="7.4" fill="#1414d8"/>
<rect x="1281" y="355.4" width="1" height="26.6" fill="#141480"/>
<rect x="1278" y="355.4" width="7" height="8.2" fill="#1414d8"/>
<rect x="1291" y="335.4" width="1" height="14.2" fill="#a02828"/>
<rect x="1288" y="336.4" width="7" height="13.2" fill="#e81818"/>
<rect x="1301" y="323.0" width="1" height="27.4" fill="#141480"/>
<rect x="1298" y="330.4" width="7" height="5.2" fill="#1414d8"/>
<rect x="1311" y="345.0" width="1" height="33.4" fill="#141480"/>
<rect x="1308" y="348.4" width="7" height="23.2" fill="#1414d8"/>
<rect x="1341" y="368.4" width="1" height="26.0" fill="#141480"/>
<rect x="1338" y="372.0" width="7" height="20.0" fill="#1414d8"/>
<rect x="1351" y="377.6" width="1" height="19.2" fill="#141480"/>
<rect x="1348" y="388.4" width="7" height="6.0" fill="#1414d8"/>
<rect x="1361" y="345.0" width="1" height="32.6" fill="#a02828"/>
<rect x="1358" y="350.4" width="7" height="25.6" fill="#e81818"/>
<rect x="1371" y="350.4" width="1" height="29.6" fill="#141480"/>
<rect x="1368" y="350.4" width="7" height="17.2" fill="#1414d8"/>
<rect x="1381" y="350.4" width="1" height="38.0" fill="#a02828"/>
<rect x="1378" y="361.4" width="7" height="19.0" fill="#e81818"/>
<rect x="1411" y="323.3" width="1" height="27.1" fill="#a02828"/>
<rect x="1408" y="328.0" width="7" height="22.4" fill="#e81818"/>
<rect x="1421" y="329.4" width="1" height="19.6" fill="#141480"/>
<rect x="1418" y="332.4" width="7" height="12.0" fill="#1414d8"/>
<rect x="1431" y="357.4" width="1" height="32.2" fill="#141480"/>
<rect x="1428" y="357.4" width="7" height="23.6" fill="#1414d8"/>
<rect x="1441" y="371.0" width="1" height="21.4" fill="#a02828"/>
<rect x="1438" y="388.4" width="7" height="2.6" fill="#e81818"/>
<rect x="1451" y="380.0" width="1" height="9.6" fill="#a02828"/>
<rect x="1448" y="380.4" width="7" height="4.0" fill="#e81818"/>
<rect x="1481" y="348.4" width="1" height="43.2" fill="#a02828"/>
<rect x="1478" y="362.4" width="7" height="25.2" fill="#e81818"/>
<rect x="1491" y="381.4" width="1" height="30.2" fill="#141480"/>
<rect x="1488" y="381.4" width="7" height="19.0" fill="#1414d8"/>
<rect x="1501" y="393.6" width="1" height="20.8" fill="#a02828"/>
<rect x="1498" y="402.4" width="7" height="12.0" fill="#e81818"/>
<rect x="1511" y="398.4" width="1" height="20.6" fill="#141480"/>
<rect x="1508" y="398.4" width="7" height="17.2" fill="#1414d8"/>
<rect x="1521" y="417.0" width="1" height="13.4" fill="#141480"/>
<rect x="1518" y="418.4" width="7" height="8.0" fill="#1414d8"/>
<text x="127" y="307" class="lbl">04/07</text>
<text x="127" y="319" class="lbl">13485.30</text>
<text x="57" y="466" class="lbl">12430.63</text>
<text x="57" y="478" class="lbl">03/31</text>
<text x="197" y="412" class="lbl">12858.63</text>
<text x="197" y="423" class="lbl">04/14</text>
<text x="426" y="213" class="lbl">05/07</text>
<text x="426" y="226" class="lbl">14208.67</text>
<text x="516" y="191" class="lbl">05/16</text>
<text x="516" y="203" class="lbl">14392.53</text>
<text x="476" y="323" class="lbl">13540.68</text>
<text x="476" y="335" class="lbl">05/12</text>
<text x="577" y="308" class="lbl">13658.02</text>
<text x="577" y="320" class="lbl">05/22</text>
<text x="727" y="164" class="lbl">06/06</text>
<text x="727" y="176" class="lbl">14601.27</text>
<text x="797" y="288" class="lbl">13810.38</text>
<text x="797" y="300" class="lbl">06/13</text>
<text x="847" y="180" class="lbl">06/18</text>
<text x="847" y="191" class="lbl">14469.99</text>
<text x="1127" y="435" class="lbl">12671.34</text>
<text x="1127" y="446" class="lbl">07/16</text>
<text x="1207" y="292" class="lbl">07/24</text>
<text x="1207" y="305" class="lbl">13603.31</text>
<text x="1327" y="407" class="lbl">12893.34</text>
<text x="1327" y="419" class="lbl">08/05</text>
<text x="1387" y="309" class="lbl">08/11</text>
<text x="1387" y="321" class="lbl">13468.81</text>
<rect x="9" y="605" width="1512" height="1" fill="#303090"/>
<rect x="9" y="656" width="1512" height="1" fill="#e08850"/>
<rect x="9" y="697" width="1512" height="1" fill="#c03030"/>
<polyline points="9.0,666.7 20.7,659.0 39.8,663.5 51.0,655.8 81.3,664.4 92.4,659.0 102.0,645.3 111.5,642.0 122.7,645.3 149.8,641.2 180.0,656.5 191.0,646.3 223.0,658.0 250.0,645.3 290.0,638.3 301.0,643.7 309.0,642.0 320.0,644.4 331.4,635.0 350.5,633.5 379.0,635.8 390.0,640.0 401.0,632.0 449.0,631.0 471.6,650.0 500.0,647.6 530.3,631.6 541.4,634.2 568.5,631.0 579.7,636.7 592.4,648.5 610.0,646.0 640.2,659.7 651.4,652.7 661.0,658.0 672.0,643.7 681.6,638.0 708.7,634.8 721.5,645.3 731.0,638.0 742.0,642.0 751.7,638.3 791.6,656.5 799.6,650.0 812.3,660.3 850.5,645.3 860.0,646.3 869.7,643.0 888.8,659.7 901.5,662.2 949.3,665.4 960.5,674.0 997.0,676.2 1011.5,682.6 1016.5,683.2 1029.8,684.6 1059.6,676.6 1072.8,686.9 1089.3,684.2 1129.0,686.5 1142.3,694.8 1150.6,694.8 1162.0,684.2 1170.4,686.9 1220.0,657.8 1231.6,645.2 1243.2,656.8 1271.3,655.4 1281.3,663.7 1291.2,653.8 1301.1,654.5 1312.7,665.4 1349.0,672.7 1360.7,657.1 1372.3,661.0 1410.3,649.5 1420.3,652.8 1431.8,665.4 1440.0,667.7 1479.8,658.4 1492.4,669.3 1503.0,669.3 1521.2,675.3" fill="none" stroke="#e8702c" stroke-width="3" stroke-linejoin="round"/>
<rect x="9" y="729" width="1512" height="1" fill="#c8c8c8"/>
<rect x="9" y="780" width="1512" height="1" fill="#c8c8c8"/>
<polyline points="9.0,754.4 51.0,754.4 81.3,763.3 111.5,737.5 122.7,746.4 151.4,746.4 162.5,754.4 172.0,754.4 181.6,763.3 191.2,754.4 231.0,754.4 242.2,746.4 321.9,746.4 333.0,736.9 361.7,729.5 380.8,737.5 449.3,737.5 471.6,754.4 500.3,754.4 511.2,746.4 520.7,746.4 531.2,737.5 541.4,746.4 641.8,746.4 651.4,737.5 661.9,746.4 740.6,746.4 751.7,737.5 780.4,745.8 791.6,754.4 801.1,746.4 811.7,754.4 821.9,746.4 852.1,746.4 861.7,754.4 880.8,754.4 891.3,763.3 920.6,763.3 930.9,771.3 951.0,771.3 961.4,780.5 992.4,780.5 1011.6,797.0 1021.5,797.0 1031.4,806.0 1059.6,797.7 1070.2,797.7 1091.0,780.4 1141.6,780.4 1161.5,763.6 1172.0,763.6 1211.8,754.6 1221.0,746.4 1271.3,746.4 1281.3,754.0 1301.8,737.1 1311.0,737.1 1340.8,746.4 1351.4,754.0 1361.4,746.4 1372.3,754.6 1421.0,754.6 1431.2,763.6 1511.3,763.6 1521.2,770.5" fill="none" stroke="#801c28" stroke-width="1" shape-rendering="crispEdges"/>
<rect x="9" y="877" width="1512" height="1" fill="#a0a0a0"/>
<rect x="11" y="877.0" width="1" height="2.0" fill="#a02020"/>
<rect x="21" y="875.0" width="1" height="2.0" fill="#a02020"/>
<rect x="31" y="871.7" width="1" height="5.3" fill="#a02020"/>
<rect x="41" y="870.8" width="1" height="6.2" fill="#a02020"/>
<rect x="51" y="867.6" width="1" height="9.4" fill="#a02020"/>
<rect x="81" y="869.0" width="1" height="8.0" fill="#a02020"/>
<rect x="91" y="868.5" width="1" height="8.5" fill="#a02020"/>
<rect x="101" y="863.4" width="1" height="13.6" fill="#a02020"/>
<rect x="111" y="859.6" width="1" height="17.4" fill="#a02020"/>
<rect x="121" y="858.7" width="1" height="18.3" fill="#a02020"/>
<rect x="151" y="856.4" width="1" height="20.6" fill="#a02020"/>
<rect x="161" y="858.7" width="1" height="18.3" fill="#a02020"/>
<rect x="171" y="861.8" width="1" height="15.2" fill="#a02020"/>
<rect x="181" y="866.6" width="1" height="10.4" fill="#a02020"/>
<rect x="191" y="866.6" width="1" height="10.4" fill="#a02020"/>
<rect x="221" y="870.8" width="1" height="6.2" fill="#a02020"/>
<rect x="231" y="872.4" width="1" height="4.6" fill="#a02020"/>
<rect x="241" y="872.4" width="1" height="4.6" fill="#a02020"/>
<rect x="251" y="870.8" width="1" height="6.2" fill="#a02020"/>
<rect x="261" y="869.8" width="1" height="7.2" fill="#a02020"/>
<rect x="291" y="868.5" width="1" height="8.5" fill="#a02020"/>
<rect x="301" y="866.6" width="1" height="10.4" fill="#a02020"/>
<rect x="311" y="869.8" width="1" height="7.2" fill="#a02020"/>
<rect x="321" y="869.8" width="1" height="7.2" fill="#a02020"/>
<rect x="331" y="868.5" width="1" height="8.5" fill="#a02020"/>
<rect x="361" y="867.6" width="1" height="9.4" fill="#a02020"/>
<rect x="381" y="869.0" width="1" height="8.0" fill="#a02020"/>
<rect x="391" y="870.8" width="1" height="6.2" fill="#a02020"/>
<rect x="401" y="869.8" width="1" height="7.2" fill="#a02020"/>
<rect x="451" y="869.8" width="1" height="7.2" fill="#a02020"/>
<rect x="461" y="870.8" width="1" height="6.2" fill="#a02020"/>
<rect x="471" y="876.0" width="1" height="1.0" fill="#a02020"/>
<rect x="521" y="876.0" width="1" height="1.0" fill="#a02020"/>
<rect x="531" y="874.6" width="1" height="2.4" fill="#a02020"/>
<rect x="541" y="874.6" width="1" height="2.4" fill="#a02020"/>
<rect x="571" y="874.0" width="1" height="3.0" fill="#a02020"/>
<rect x="581" y="876.0" width="1" height="1.0" fill="#a02020"/>
<rect x="601" y="877.0" width="1" height="2.7" fill="#a02020"/>
<rect x="611" y="877.0" width="1" height="4.3" fill="#a02020"/>
<rect x="641" y="877.0" width="1" height="6.5" fill="#a02020"/>
<rect x="651" y="877.0" width="1" height="6.5" fill="#a02020"/>
<rect x="661" y="877.0" width="1" height="8.7" fill="#a02020"/>
<rect x="671" y="877.0" width="1" height="5.9" fill="#a02020"/>
<rect x="681" y="877.0" width="1" height="1.0" fill="#a02020"/>
<rect x="711" y="877.0" width="1" height="1.0" fill="#a02020"/>
<rect x="721" y="876.0" width="1" height="1.0" fill="#a02020"/>
<rect x="731" y="876.0" width="1" height="1.0" fill="#a02020"/>
<rect x="741" y="875.5" width="1" height="1.5" fill="#a02020"/>
<rect x="751" y="874.6" width="1" height="2.4" fill="#a02020"/>
<rect x="781" y="877.0" width="1" height="1.0" fill="#a02020"/>
<rect x="791" y="877.0" width="1" height="1.0" fill="#a02020"/>
<rect x="801" y="877.0" width="1" height="2.7" fill="#a02020"/>
<rect x="811" y="877.0" width="1" height="5.9" fill="#a02020"/>
<rect x="821" y="877.0" width="1" height="6.5" fill="#a02020"/>
<rect x="851" y="877.0" width="1" height="3.0" fill="#a02020"/>
<rect x="861" y="877.0" width="1" height="1.5" fill="#a02020"/>
<rect x="881" y="877.0" width="1" height="1.5" fill="#a02020"/>
<rect x="891" y="877.0" width="1" height="3.0" fill="#a02020"/>
<rect x="921" y="877.0" width="1" height="6.5" fill="#a02020"/>
<rect x="931" y="877.0" width="1" height="7.5" fill="#a02020"/>
<rect x="941" y="877.0" width="1" height="7.5" fill="#a02020"/>
<rect x="951" y="877.0" width="1" height="8.7" fill="#a02020"/>
<rect x="961" y="877.0" width="1" height="10.7" fill="#a02020"/>
<rect x="991" y="877.0" width="1" height="10.7" fill="#a02020"/>
<rect x="1001" y="877.0" width="1" height="12.0" fill="#a02020"/>
<rect x="1011" y="877.0" width="1" height="12.5" fill="#a02020"/>
<rect x="1021" y="877.0" width="1" height="12.5" fill="#a02020"/>
<rect x="1031" y="877.0" width="1" height="12.5" fill="#a02020"/>
<rect x="1061" y="877.0" width="1" height="10.0" fill="#a02020"/>
<rect x="1071" y="877.0" width="1" height="10.0" fill="#a02020"/>
<rect x="1081" y="877.0" width="1" height="10.0" fill="#a02020"/>
<rect x="1091" y="877.0" width="1" height="8.0" fill="#a02020"/>
<rect x="1101" y="877.0" width="1" height="8.0" fill="#a02020"/>
<rect x="1131" y="877.0" width="1" height="6.8" fill="#a02020"/>
<rect x="1141" y="877.0" width="1" height="7.5" fill="#a02020"/>
<rect x="1151" y="877.0" width="1" height="6.8" fill="#a02020"/>
<rect x="1161" y="877.0" width="1" height="5.8" fill="#a02020"/>
<rect x="1171" y="877.0" width="1" height="3.2" fill="#a02020"/>
<rect x="1211" y="873.9" width="1" height="3.1" fill="#a02020"/>
<rect x="1221" y="868.0" width="1" height="9.0" fill="#a02020"/>
<rect x="1231" y="868.0" width="1" height="9.0" fill="#a02020"/>
<rect x="1271" y="867.0" width="1" height="10.0" fill="#a02020"/>
<rect x="1281" y="868.6" width="1" height="8.4" fill="#a02020"/>
<rect x="1291" y="868.0" width="1" height="9.0" fill="#a02020"/>
<rect x="1301" y="868.0" width="1" height="9.0" fill="#a02020"/>
<rect x="1311" y="870.6" width="1" height="6.4" fill="#a02020"/>
<rect x="1341" y="874.0" width="1" height="3.0" fill="#a02020"/>
<rect x="1351" y="876.0" width="1" height="1.0" fill="#a02020"/>
<rect x="1361" y="874.6" width="1" height="2.4" fill="#a02020"/>
<rect x="1371" y="874.6" width="1" height="2.4" fill="#a02020"/>
<rect x="1381" y="874.6" width="1" height="2.4" fill="#a02020"/>
<rect x="1411" y="872.0" width="1" height="5.0" fill="#a02020"/>
<rect x="1421" y="872.0" width="1" height="5.0" fill="#a02020"/>
<rect x="1431" y="874.0" width="1" height="3.0" fill="#a02020"/>
<rect x="1441" y="876.0" width="1" height="1.0" fill="#a02020"/>
<rect x="1451" y="876.0" width="1" height="1.0" fill="#a02020"/>
<rect x="1481" y="876.0" width="1" height="1.0" fill="#a02020"/>
<rect x="1491" y="877.0" width="1" height="1.5" fill="#a02020"/>
<rect x="1501" y="877.0" width="1" height="2.5" fill="#a02020"/>
<rect x="1511" y="877.0" width="1" height="4.0" fill="#a02020"/>
<rect x="1521" y="877.0" width="1" height="2.0" fill="#a02020"/>
<polyline points="9.0,924.0 28.7,912.2 41.4,909.0 51.0,905.2 81.3,904.2 92.4,901.7 102.0,894.0 122.7,879.7 149.8,874.0 161.0,870.8 191.2,868.2 223.0,869.8 235.8,871.4 250.0,868.5 261.3,864.4 290.0,859.6 321.9,855.5 333.0,851.0 361.7,847.8 390.4,846.9 400.0,844.3 420.7,843.0 458.9,842.1 471.6,846.2 494.0,847.5 519.0,846.9 536.6,843.0 576.5,842.1 592.4,846.9 611.5,851.0 640.2,856.4 661.9,862.2 678.5,859.0 697.6,855.8 729.4,854.8 751.7,851.6 780.4,853.9 802.7,859.6 821.9,866.0 850.5,863.4 872.8,860.6 895.2,868.2 920.6,870.8 958.9,883.5 990.8,888.3 1000.0,891.8 1029.8,901.7 1059.6,903.7 1072.8,908.3 1099.3,911.6 1132.4,913.3 1152.2,916.6 1175.4,915.9 1211.8,911.0 1228.3,902.7 1241.6,895.4 1281.3,891.8 1301.1,887.1 1317.7,888.5 1350.8,892.8 1370.6,888.8 1413.6,883.8 1423.6,882.8 1446.7,886.1 1489.7,886.1 1521.2,894.4" fill="none" stroke="#b02020" stroke-width="1" shape-rendering="crispEdges"/>
<polyline points="9.0,921.8 28.7,920.2 51.0,915.4 81.3,912.8 92.4,910.6 122.7,897.9 149.8,893.0 161.0,888.3 191.2,879.4 223.0,877.1 242.2,874.6 261.3,870.8 290.0,868.5 312.3,863.4 331.4,859.6 361.7,857.4 390.4,854.8 401.5,851.6 450.9,849.0 460.5,847.5 500.0,847.5 538.2,845.9 582.9,844.6 614.7,847.8 640.2,850.7 668.9,855.5 729.4,855.8 748.6,853.2 780.4,854.8 821.9,859.6 872.8,861.2 920.6,865.3 958.9,873.0 990.8,876.2 1000.0,878.5 1029.8,889.5 1059.6,892.8 1099.3,902.7 1132.4,905.0 1165.5,911.0 1208.5,911.6 1241.6,904.3 1271.3,902.7 1307.7,895.1 1347.5,892.8 1397.0,890.4 1430.2,886.1 1463.3,887.1 1503.0,888.5 1521.2,890.4" fill="none" stroke="#1c1c80" stroke-width="1" shape-rendering="crispEdges"/>
<text x="1544" y="140" class="ax">14,950.00</text>
<text x="1544" y="178" class="ax">14,650.00</text>
<text x="1544" y="216" class="ax">14,350.00</text>
<text x="1544" y="255" class="ax">14,050.00</text>
<text x="1544" y="293" class="ax">13,750.00</text>
<text x="1544" y="331" class="ax">13,450.00</text>
<text x="1544" y="370" class="ax">13,150.00</text>
<text x="1544" y="408" class="ax">12,850.00</text>
<text x="1544" y="446" class="ax">12,550.00</text>
<text x="1544" y="485" class="ax">12,250.00</text>
<text x="1544" y="523" class="ax">11,950.00</text>
<text x="1544" y="562" class="ax">11,650.00</text>
<text x="1544" y="611" class="ax">80.50</text>
<text x="1544" y="648" class="ax">58.00</text>
<text x="1544" y="685" class="ax">36.00</text>
<text x="1544" y="735" class="ax">75.00</text>
<text x="1544" y="776" class="ax">35.00</text>
<text x="1544" y="842" class="ax">300.00</text>
<text x="1544" y="883" class="ax">0.00</text>
<text x="1544" y="923" class="ax">-300.00</text>
<text x="390" y="966" class="ax">08/05</text>
<text x="1001" y="966" class="ax">08/07</text>
<text x="13 25 37 43 49 55 61 67 79 85 91 97 103 109 115 121 127 133 139 145 151 157 163 169 175 181 187 193 199 205 211 217 223 229 235" y="129" class="hd" xml:space="preserve"><tspan class="cj">日</tspan><tspan class="cj">経</tspan>225( <tspan class="cj">日</tspan>, 2006/10/25 - 2008/08/22 )</text>
<text x="261 273 285 297 309 321 333 345 357 369 375 381 387 393 399 405 411 417 423 429 435 441 447 453 459 465 471 477 483 489 495 501 507 513 519 525" y="129" class="hd" xml:space="preserve"><tspan class="cj">ボ</tspan><tspan class="cj">リ</tspan><tspan class="cj">ン</tspan><tspan class="cj">ジ</tspan><tspan class="cj">ャ</tspan><tspan class="cj">ー</tspan><tspan class="cj">バ</tspan><tspan class="cj">ン</tspan><tspan class="cj">ド</tspan>( Close, 20, 2.0, -2.0, 0 )</text>
<text x="551 563 575 587 599 605 611 617 623 629 635 641 647 653 659 665 671" y="129" class="hd" xml:space="preserve"><tspan class="cj">移</tspan><tspan class="cj">動</tspan><tspan class="cj">平</tspan><tspan class="cj">均</tspan>( Close, 25 )</text>
<text x="697 709 721 733 745 751 757 763 769 775 781 787 793 799 805 811 817" y="129" class="hd" xml:space="preserve"><tspan class="cj">移</tspan><tspan class="cj">動</tspan><tspan class="cj">平</tspan><tspan class="cj">均</tspan>( Close, 75 )</text>
<text x="843 855 867 879 891 903 915 927" y="129" class="hd" xml:space="preserve"><tspan class="cj">期</tspan><tspan class="cj">間</tspan><tspan class="cj">高</tspan><tspan class="cj">安</tspan><tspan class="cj">表</tspan><tspan class="cj">示</tspan><tspan class="cj">機</tspan><tspan class="cj">能</tspan></text>
<text x="12 18 24 30 36 42 48 54 60 66 72 78 84 90 96 102 108 114 120 126 132 138 144 150" y="600" class="hd" xml:space="preserve">RSI( Close, 14, 25, 80 )</text>
<text x="12 24 36 48 60 72 84 96 108 120 132 138 144 150 156 162 168 174 180 186 192 198 204 210" y="724" class="hd" xml:space="preserve"><tspan class="cj">サ</tspan><tspan class="cj">イ</tspan><tspan class="cj">コ</tspan><tspan class="cj">ロ</tspan><tspan class="cj">ジ</tspan><tspan class="cj">カ</tspan><tspan class="cj">ル</tspan><tspan class="cj">ラ</tspan><tspan class="cj">イ</tspan><tspan class="cj">ン</tspan>( 12, 75, 25 )</text>
<text x="12 18 24 30 36 42 48 54 60 66 72 78 84 90 96 102 108" y="832" class="hd" xml:space="preserve">MACD( 12, 26, 9 )</text>
<rect x="1604.5" y="118.5" width="14" height="12" fill="#fafafa" stroke="#b0b0b0"/>
<path d="M1606 121 L1617 121 L1611.5 127 Z" fill="#606060"/>
<rect x="1604.5" y="589.5" width="14" height="12" fill="#fafafa" stroke="#b0b0b0"/>
<path d="M1606 592 L1617 592 L1611.5 598 Z" fill="#606060"/>
<rect x="1604.5" y="713.5" width="14" height="12" fill="#fafafa" stroke="#b0b0b0"/>
<path d="M1606 716 L1617 716 L1611.5 722 Z" fill="#606060"/>
<rect x="1604.5" y="821.5" width="14" height="12" fill="#fafafa" stroke="#b0b0b0"/>
<path d="M1606 824 L1617 824 L1611.5 830 Z" fill="#606060"/>
</svg>
<!-- left border of chart -->
<div class="a" style="left:7px;top:92px;width:2px;height:904px;background:#000"></div>
<!-- scrollbar row -->
<div class="a" style="left:24px;top:978px;width:971px;height:17px;background:repeating-conic-gradient(#c8c8c8 0 25%,#f0f0f0 0 50%) 0 0/2px 2px"></div>
<div class="zb" style="left:8px;top:978px;width:16px;height:17px;background:#c8c8c8"></div><div class="a" style="left:13px;top:982px;width:0;height:0;border-top:4px solid transparent;border-bottom:4px solid transparent;border-right:4px solid #000"></div>
<div class="a" style="left:995px;top:979px;width:285px;height:15px;background:#c8c8c8;border:1px solid #999"></div>
<div class="zb" style="left:1280px;top:978px;width:16px;height:17px;background:#c8c8c8"></div><div class="a" style="left:1287px;top:982px;width:0;height:0;border-top:4px solid transparent;border-bottom:4px solid transparent;border-left:4px solid #000"></div>
<div class="a" style="left:1296px;top:978px;width:121px;height:17px;background:#c4c4c4"></div>
<div class="a" style="left:1301px;top:982px;width:110px;height:3px;background:#111"></div>
<div class="a" style="left:1312px;top:980px;width:5px;height:11px;background:#333;border-radius:1px"></div><div class="a" style="left:1303px;top:992px;width:1px;height:3px;background:#333"></div><div class="a" style="left:1410px;top:992px;width:1px;height:3px;background:#333"></div>
<svg class="a" style="left:1417px;top:978px" width="16" height="17"><rect x="0.5" y="0.5" width="15" height="16" fill="#eef0f4" stroke="#a0a4ac"/><path d="M3 8 L8 3.5 L8 12.5 Z" fill="#0f2f70"/><rect x="9.5" y="3.5" width="2" height="9" fill="#0f2f70"/></svg>
<svg class="a" style="left:1434px;top:978px" width="16" height="17"><rect x="0.5" y="0.5" width="15" height="16" fill="#eef0f4" stroke="#a0a4ac"/><rect x="3" y="7" width="10" height="2.2" fill="#222"/><rect x="6.9" y="3" width="2.2" height="10" fill="#222"/></svg>
<svg class="a" style="left:1451px;top:978px" width="16" height="17"><rect x="0.5" y="0.5" width="15" height="16" fill="#eef0f4" stroke="#a0a4ac"/><rect x="3" y="7.5" width="10" height="2" fill="#222"/></svg>
<svg class="a" style="left:1468px;top:978px" width="16" height="17"><rect x="0.5" y="0.5" width="15" height="16" fill="#eef0f4" stroke="#a0a4ac"/><path d="M2 8 L6 4.5 L6 11.5 Z M14 8 L10 4.5 L10 11.5 Z" fill="#0f2f70"/><rect x="7" y="3" width="2" height="10" fill="#0f2f70"/></svg>
<svg class="a" style="left:1485px;top:978px" width="16" height="17"><rect x="0.5" y="0.5" width="15" height="16" fill="#eef0f4" stroke="#a0a4ac"/><rect x="5.5" y="5.5" width="5" height="5" fill="#0f2f70"/></svg>
<svg class="a" style="left:1502px;top:978px" width="16" height="17"><rect x="0.5" y="0.5" width="15" height="16" fill="#eef0f4" stroke="#a0a4ac"/><path d="M5.5 3.5 L11 8 L5.5 12.5 Z" fill="#0f2f70"/></svg>
<svg class="a" style="left:1519px;top:978px" width="16" height="17"><rect x="0.5" y="0.5" width="15" height="16" fill="#eef0f4" stroke="#a0a4ac"/><text x="3" y="13" font-family="Liberation Sans" font-weight="bold" font-size="13" fill="#222">D</text></svg>
<svg class="a" style="left:1536px;top:978px" width="16" height="17"><rect x="0.5" y="0.5" width="15" height="16" fill="#eef0f4" stroke="#a0a4ac"/><text x="4" y="13" font-family="Liberation Sans" font-weight="bold" font-size="13" fill="#444">L</text></svg>
<svg class="a" style="left:1553px;top:978px" width="16" height="17"><rect x="0.5" y="0.5" width="15" height="16" fill="#eef0f4" stroke="#a0a4ac"/><text x="3" y="13" font-family="Liberation Sans" font-weight="bold" font-size="13" fill="#222">R</text></svg>
<svg class="a" style="left:1570px;top:978px" width="16" height="17"><rect x="0.5" y="0.5" width="15" height="16" fill="#eef0f4" stroke="#a0a4ac"/><circle cx="7" cy="7" r="4" fill="none" stroke="#222" stroke-width="1.5"/><path d="M5 7 H9 M7 5 V9" stroke="#222"/><path d="M10 10 L13.5 13.5" stroke="#222" stroke-width="2"/></svg>
<svg class="a" style="left:1587px;top:978px" width="16" height="17"><rect x="0.5" y="0.5" width="15" height="16" fill="#eef0f4" stroke="#a0a4ac"/><path d="M3.5 3.5 L12.5 12.5 M12.5 3.5 L3.5 12.5" stroke="#222" stroke-width="2"/></svg>
<svg class="a" style="left:1604px;top:978px" width="16" height="17"><rect x="0.5" y="0.5" width="15" height="16" fill="#eef0f4" stroke="#a0a4ac"/><rect x="3.5" y="3.5" width="2" height="9" fill="#0f2f70"/><path d="M7 3.5 L12.5 8 L7 12.5 Z" fill="#0f2f70"/></svg>
<!-- tab row -->
<div class="a" style="left:6px;top:996px;width:1615px;height:20px;background:#fff;border-top:1px solid #000"></div>
<div class="a" style="left:6px;top:996px;width:61px;height:20px;background:linear-gradient(#fff,#e6e6e6);border-right:2px solid #999;color:#000;font-weight:bold;font-size:13px;line-height:20px;padding-left:7px"><b class="c">日</b><b class="c">経</b>225</div>
<div class="bb" style="left:1303px;width:79px"><b class="c k">チ</b><b class="c k">ャ</b><b class="c k">ー</b><b class="c k">ト</b><b class="c">追</b><b class="c">加</b></div>
<div class="bb" style="left:1383px;width:79px"><b class="c k">チ</b><b class="c k">ャ</b><b class="c k">ー</b><b class="c k">ト</b><b class="c">削</b><b class="c">除</b></div>
<div class="bb" style="left:1462px;width:80px"><b class="c">表</b><b class="c">示</b><b class="c">切</b><b class="c">替</b></div>
<div class="bb" style="left:1542px;width:79px"><b class="c">画</b><b class="c">面</b><b class="c">設</b><b class="c">定</b></div>
<div class="a" style="left:3px;top:1016px;width:1618px;height:4px;background:#333"></div>
<div class="a" style="left:0;top:1020px;width:1627px;height:1px;background:#c8c8c8"></div><div class="a" style="left:0;top:1021px;width:1627px;height:1px;background:#eee"></div>
<!-- status bar -->
<div class="a" style="left:0;top:1022px;width:1627px;height:28px;background:linear-gradient(#383838,#101010)"></div>
<div class="a" style="left:9px;top:1028px;width:14px;height:14px;background:#fff;border:1px solid #999"></div>
<div class="a" style="left:30px;top:1024px;width:53px;height:22px;background:#222;color:#eee;font-size:12px;line-height:22px;text-align:center;border:1px solid #555">TOPIX</div>
<div class="cell" style="left:83px;width:36px;color:#702040">5</div>
<div class="cell" style="left:119px;width:35px;color:#d080b0">669</div>
<div class="cell" style="left:154px;width:35px;color:#111">125</div>
<div class="cell" style="left:189px;width:35px;color:#30a0c0">922</div>
<div class="cell" style="left:224px;width:35px;color:#202060">0</div>
<div class="a" style="left:262px;top:1024px;width:292px;height:22px;background:#fff"></div>
<div class="t" style="left:264px;top:1029px;color:#888;font-size:12px;letter-spacing:-0.6px">[15:00]</div>
<div class="t" style="left:302px;top:1029px;color:#111;font-size:12px;--kw:8px">J<b class="c k">ス</b><b class="c k">ト</b><b class="c k">ッ</b><b class="c k">ク</b></div>
<div class="t" style="left:366px;top:1029px;color:#111;font-size:12px;letter-spacing:-0.6px">1,244.14</div>
<div class="a" style="left:430px;top:1028px;width:0;height:0;border-left:6px solid transparent;border-right:6px solid transparent;border-bottom:12px solid #e01010"></div>
<div class="t" style="left:446px;top:1029px;color:#b02020;font-size:12px;letter-spacing:-0.6px">3.32</div>
<div class="t" style="left:495px;top:1029px;color:#b02020;font-size:12px;letter-spacing:-0.6px">( 0.27% )</div>
<div class="a" style="left:555px;top:1024px;width:18px;height:22px;background:#222"></div>
<svg class="a" style="left:557px;top:1027px" width="14" height="15"><rect x="0.5" y="0.5" width="13" height="14" fill="#e8ecf4" stroke="#999"/><path d="M7 3 L11 7.5 L8.5 7.5 L8.5 11 L5.5 11 L5.5 7.5 L3 7.5 Z" fill="#123"/></svg>
<div class="a" style="left:573px;top:1024px;width:1017px;height:22px;background:#fff"></div>
<svg class="a" style="left:1271px;top:1033px" width="354" height="15">
<rect width="354" height="15" fill="#a9b58e"/>
<rect x="1" y="2" width="13" height="11" fill="#e8eedc" stroke="#8a9878"/><path d="M3 5 H12 M3 10 H12" stroke="#7a8868"/><rect x="4" y="6" width="2" height="3" fill="#7a8868"/><rect x="7" y="6" width="2" height="3" fill="#7a8868"/><rect x="10" y="6" width="2" height="3" fill="#7a8868"/>
<rect x="16" y="3" width="2" height="9" fill="#107010"/><rect x="19" y="3" width="2" height="9" fill="#107010"/><rect x="22" y="3" width="2" height="9" fill="#107010"/>
<rect x="25" y="3" width="52" height="9" fill="#a0ac84"/>
<text x="49" y="12" font-family="Liberation Mono" font-size="10" fill="#2a7a2a" letter-spacing="-1">797.97</text>
<path d="M81.5 2 V13" stroke="#e0e8d0" stroke-dasharray="1,1"/>
<text x="84" y="12" font-family="Liberation Mono" font-size="10" fill="#2a7a2a" letter-spacing="-1">039.48</text>
<rect x="119" y="2" width="16" height="11" fill="#e8eedc"/><circle cx="124" cy="7.5" r="3.5" fill="none" stroke="#7a8868" stroke-width="1.5"/><path d="M129 3 L134 7.5 L129 12" stroke="#7a8868" fill="none"/>
<rect x="138" y="3" width="2" height="9" fill="#107010"/>
<rect x="141" y="3" width="55" height="9" fill="#a0ac84"/>
<text x="169" y="12" font-family="Liberation Mono" font-size="10" fill="#2a7a2a" letter-spacing="-1">641.1</text>
<path d="M197.5 2 V13" stroke="#e0e8d0" stroke-dasharray="1,1"/>
<text x="200" y="12" font-family="Liberation Mono" font-size="10" fill="#2a7a2a" letter-spacing="-1">453.3</text>
<rect x="230" y="2" width="11" height="11" fill="#e8eedc" stroke="#7a8868"/><rect x="233" y="3" width="5" height="4" fill="#7a8868"/>
<rect x="244" y="3" width="2" height="9" fill="#107010"/><rect x="247" y="3" width="2" height="9" fill="#107010"/><rect x="250" y="3" width="2" height="9" fill="#107010"/><rect x="253" y="3" width="2" height="9" fill="#107010"/><rect x="256" y="3" width="2" height="9" fill="#30c030"/><rect x="259" y="3" width="2" height="9" fill="#40e040"/><rect x="262" y="3" width="2" height="9" fill="#40e040"/><rect x="265" y="3" width="2" height="9" fill="#d02020"/><rect x="268" y="3" width="2" height="9" fill="#d02020"/>
<text x="276" y="12" font-family="Liberation Mono" font-size="10" fill="#e8f0e0" letter-spacing="-1">100%</text>
<rect x="302" y="2" width="12" height="11" fill="#e8eedc"/><path d="M305 7 A3 3 0 1 1 311 8" stroke="#7a8868" fill="none" stroke-width="1.4"/>
<rect x="317" y="1" width="10" height="13" fill="#e8eedc" stroke="#222"/><rect x="329" y="1" width="11" height="13" fill="#e8eedc" stroke="#222"/><rect x="342" y="1" width="11" height="13" fill="#e8eedc" stroke="#222"/>
</svg>
<div class="a" style="left:1590px;top:1024px;width:34px;height:9px;background:#2a2a2a"></div>
</body></html>
